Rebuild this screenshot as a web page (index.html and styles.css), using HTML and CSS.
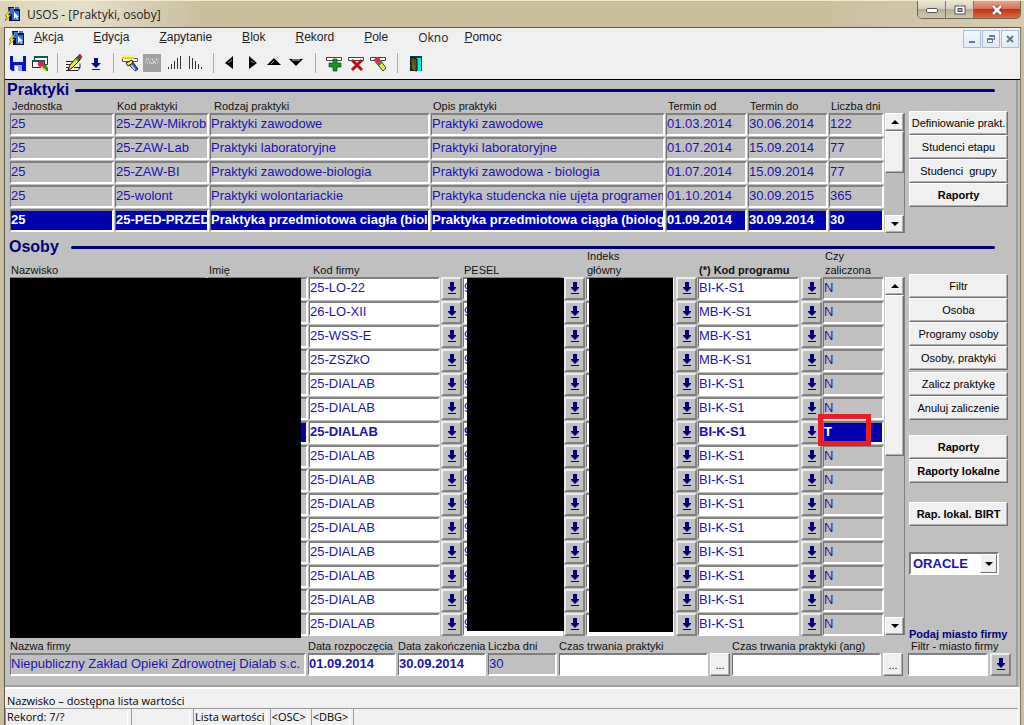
FILE: index.html
```html
<!DOCTYPE html>
<html lang="pl">
<head>
<meta charset="utf-8">
<title>USOS - [Praktyki, osoby]</title>
<link rel="stylesheet" href="styles.css">
</head>
<body>
<svg class="sprite" aria-hidden="true">
  <symbol id="app" viewBox="0 0 16 16">
    <path d="M3 1h6v2h6v12H4V8z" fill="#06104e"/>
    <path d="M5 2h4v3H5zM10 1h4v2h-4z" fill="#3678d8"/>
    <path d="M4 5h3v3H4zM7 5h7v9H7z" fill="#2e6de0"/>
    <path d="M9 6v7l2-2 1 3 1-1-1-2h2z" fill="#fff"/>
    <path d="M4 5 0 10h2l-2 5 6-6H3l3-4z" fill="#ffea20" stroke="#4a4200" stroke-width=".5"/>
  </symbol>
  <symbol id="lov" viewBox="0 0 10 13">
    <path d="M3 0h4v5h2v1L5 10 1 6V5h2zM1 11h8v1H1z" fill="#00007b"/>
  </symbol>
  <symbol id="up" viewBox="0 0 8 4"><path d="M0 4 4 0l4 4z" fill="#000"/></symbol>
  <symbol id="down" viewBox="0 0 8 4"><path d="M0 0h8L4 4z" fill="#000"/></symbol>
</svg>
<div class="window">
  <header class="titlebar">
    <svg class="app-icon"><use href="#app"/></svg>
    <h1 class="title">USOS - [Praktyki, osoby]</h1>
    <div class="win-controls">
      <button class="win-btn" aria-label="Minimalizuj"><svg width="14" height="8"><rect x="1.500" y="2.500" width="11" height="4" rx="1" fill="#fff" stroke="#555"/></svg></button>
      <button class="win-btn" aria-label="Maksymalizuj"><svg width="12" height="10"><rect x="1" y="1" width="10" height="8" fill="#fff" stroke="#555"/><rect x="4" y="3.500" width="4" height="3" fill="#aaa" stroke="#555"/></svg></button>
      <button class="win-btn win-close" aria-label="Zamknij"><svg width="12" height="10"><path d="m2 1 8 8m0-8L2 9" stroke="#5b3430" stroke-width="4"/><path d="m2 1 8 8m0-8L2 9" stroke="#fff" stroke-width="2.500"/></svg></button>
    </div>
  </header>
  <div class="frame">
    <nav class="menubar">
      <svg class="app-icon"><use href="#app"/></svg>
      <div class="menus">
        <a href="#"><u>A</u>kcja</a>
        <a href="#"><u>E</u>dycja</a>
        <a href="#"><u>Z</u>apytanie</a>
        <a href="#"><u>B</u>lok</a>
        <a href="#"><u>R</u>ekord</a>
        <a href="#"><u>P</u>ole</a>
        <a href="#" class="menu-system">Okno</a>
        <a href="#"><u>P</u>omoc</a>
      </div>
      <div class="mdi-controls">
        <button aria-label="Minimalizuj okno"><svg width="10" height="10"><path d="M2 7h6v2H2z" fill="#64778f"/></svg></button>
        <button aria-label="Przywróć okno"><svg width="10" height="10" fill="none" stroke="#64778f"><path d="M3.500 3V1.500h5v4H7M3 2.500h6M1.500 4.500h5v4h-5zM1 5.500h6"/></svg></button>
        <button aria-label="Zamknij okno"><svg width="10" height="10"><path d="m2 2 6 6m0-6L2 8" stroke="#64778f" stroke-width="2"/></svg></button>
      </div>
    </nav>
    <div class="toolbar" role="toolbar">
      <button aria-label="Zapisz"><svg viewBox="0 0 18 18"><path d="M1 2h16v15H3l-2-2z" fill="#0a10c4"/><path d="M4 2h10v6H4z" fill="#e8ecff"/><path d="M5 11h8v6H5z" fill="#9aa4e0"/><path d="M6 12h3v5H6z" fill="#fff"/></svg></button>
      <button aria-label="Drukuj"><svg viewBox="0 0 18 18"><path d="M3.500 2.500h13v8h-13z" fill="#fff" stroke="#123c3c"/><path d="M3 2h14v2H3z" fill="#155"/><path d="M1.500 6.500h12v7h-12z" fill="#fff" stroke="#222"/><path d="M1 6h13v2H1z" fill="#155"/><circle cx="10" cy="10" r="3" fill="#e0184c"/><path d="m11 13 3-3 3 4v3h-2z" fill="#2c8a20"/><path d="m10 13 5 4" stroke="#f2e21a" stroke-width="2"/></svg></button>
      <span class="sep"></span>
      <button aria-label="Edytuj"><svg viewBox="0 0 18 18"><path d="M1 7.500h9M1 10.500h4M1 13.500h3M9 13.500h6v-4M1 16.500h12l2-3" fill="none" stroke="#222"/><path d="m3 16 2-5 7-8 3 3-8 8z" fill="#f4e030" stroke="#222"/><path d="m12 3 3 3 2-3-2-3z" fill="#d21838" stroke="#222" stroke-width=".5"/><path d="m11 4 3 3" stroke="#14a040" stroke-width="2"/></svg></button>
      <button aria-label="Lista wartości"><svg viewBox="0 0 18 18"><path d="M7 4h4v5h3l-5 5-5-5h3zM5 15h8v1H5z" fill="#00108b"/></svg></button>
      <span class="sep"></span>
      <button aria-label="Wprowadź zapytanie"><svg viewBox="0 0 18 18"><path d="M0 1h12v7H0z" fill="#fff36a"/><path d="M1.500 4.500h15v3h-15z" fill="#fff" stroke="#555"/><path d="M1 4h12" stroke="#e8d300" stroke-width="2"/><path d="m6 9 5-2 6 8-3 2z" fill="#3862b8" stroke="#222"/><path d="m5 9 6-3 1 3-5 3z" fill="#f2ee60" stroke="#222"/><path d="m10 11 4 5" stroke="#a9d0ff" stroke-width="2"/></svg></button>
      <button aria-label="Wykonaj zapytanie" disabled><svg viewBox="0 0 18 18"><path d="M0 0h18v18H0z" fill="#a0a0a0"/><path d="M3 5h12v4H3z" fill="none" stroke="#ddd" stroke-dasharray="1 1"/><path d="m4 5 5 5 5-5M9 6l4 4" stroke="#e8e8e8" stroke-dasharray="2 1" fill="none"/></svg></button>
      <button aria-label="Sortuj rosnąco"><svg viewBox="0 0 18 18"><path d="M3.500 13v2M6.500 10v5M9.500 7v8M12.500 4v11M15.500 2v13" stroke="#333"/></svg></button>
      <button aria-label="Sortuj malejąco"><svg viewBox="0 0 18 18"><path d="M2.500 2v13M5.500 4v11M8.500 7v8M11.500 10v5M14.500 13v2" stroke="#333"/></svg></button>
      <span class="sep"></span>
      <button aria-label="Poprzedni blok"><svg viewBox="0 0 18 18"><path d="M12 2v13L4 9z"/><path d="m11 6-4 3" stroke="#999"/></svg></button>
      <button aria-label="Następny blok"><svg viewBox="0 0 18 18"><path d="M6 2v13l8-6z"/><path d="m8 7 3 2" stroke="#999"/></svg></button>
      <button aria-label="Poprzedni rekord"><svg viewBox="0 0 18 18"><path d="M2 11h14L9 4z"/><path d="M6 10l3-3" stroke="#aaa"/></svg></button>
      <button aria-label="Następny rekord"><svg viewBox="0 0 18 18"><path d="M2 5h14l-7 7z"/><path d="M5 6h8" stroke="#ddd"/></svg></button>
      <span class="sep sep-wide"></span>
      <button aria-label="Wstaw rekord"><svg viewBox="0 0 18 18"><path d="M1.500 3.500h15v3h-15z" fill="#fff" stroke="#444"/><path d="M8 5h4v4h4v4h-4v4H8v-4H4V9h4z" fill="#15902b" stroke="#0a4c16" stroke-width=".7"/></svg></button>
      <button aria-label="Usuń rekord"><svg viewBox="0 0 18 18"><path d="M1.500 3.500h15v3h-15z" fill="#fff" stroke="#444"/><path d="m5 6 10 10m0-10L5 16" stroke="#b5101c" stroke-width="3"/></svg></button>
      <button aria-label="Wyczyść rekord"><svg viewBox="0 0 18 18"><path d="M1.500 3.500h15v3h-15z" fill="#fff" stroke="#444"/><path d="m5 6 4-3 8 11-3 3z" fill="#f2e832" stroke="#444"/><path d="m5 6 4-3 3 4-4 3z" fill="#e02858"/><path d="m8 10 4-3 1 2-3 3z" fill="#209040"/></svg></button>
      <span class="sep sep-wide"></span>
      <button aria-label="Wyjście"><svg viewBox="0 0 18 18"><path d="M3 2h12v15H3z" fill="#083c3c"/><path d="M9 4h5v13H9z" fill="#10e6ee"/><path d="m4 3 6 2v12l-6-1z" fill="#574d18" stroke="#111"/><path d="m5 7 3 7m-3-3 3 6" stroke="#9b8e3a" stroke-dasharray="1 1"/></svg></button>
    </div>

    <main class="canvas">
      <section class="block">
        <h2 class="block-title">Praktyki</h2>
        <div class="block-body">
          <table class="grid" id="praktyki">
            <colgroup><col class="w105"><col class="w95"><col class="w221"><col><col class="w82"><col class="w81"><col class="w56"></colgroup>
            <thead><tr><th>Jednostka</th><th>Kod praktyki</th><th class="indent">Rodzaj praktyki</th><th>Opis praktyki</th><th>Termin od</th><th>Termin do</th><th>Liczba dni</th></tr></thead>
            <tbody></tbody>
          </table>
          <div class="scroll">
            <button aria-label="W górę"><svg><use href="#up"/></svg></button>
            <div class="thumb thumb-short"></div>
            <button class="scroll-end" aria-label="W dół"><svg><use href="#down"/></svg></button>
          </div>
          <div class="side">
            <button class="btn">Definiowanie prakt.</button>
            <button class="btn">Studenci etapu</button>
            <button class="btn">Studenci&nbsp; grupy</button>
            <button class="btn strong">Raporty</button>
          </div>
        </div>
      </section>

      <section class="block block-people">
        <h2 class="block-title">Osoby</h2>
        <div class="block-body">
          <table class="grid" id="osoby">
            <colgroup><col><col class="w101"><col class="w132"><col class="w22"><col class="w101"><col class="w22"><col class="w90"><col class="w22"><col class="w103"><col class="w22"><col class="w62"></colgroup>
            <thead><tr><th class="flush">Nazwisko</th><th class="flush">Imię</th><th class="indent" colspan="2">Kod firmy</th><th class="flush" colspan="2">PESEL</th><th class="flush" colspan="2">Indeks<br>główny</th><th class="flush strong" colspan="2">(*) Kod programu</th><th>Czy<br>zaliczona</th></tr></thead>
            <tbody></tbody>
          </table>
          <div class="scroll">
            <button aria-label="W górę"><svg><use href="#up"/></svg></button>
            <div class="thumb thumb-long"></div>
            <button class="scroll-end" aria-label="W dół"><svg><use href="#down"/></svg></button>
          </div>
          <div class="side">
            <div class="group"><button class="btn">Filtr</button><button class="btn">Osoba</button><button class="btn">Programy osoby</button><button class="btn">Osoby, praktyki</button></div>
            <div class="group"><button class="btn">Zalicz praktykę</button><button class="btn">Anuluj zaliczenie</button></div>
            <div class="group reports"><button class="btn strong">Raporty</button><button class="btn strong">Raporty lokalne</button></div>
            <div class="group birt"><button class="btn strong">Rap. lokal. BIRT</button></div>
            <div class="combo">
              <select aria-label="Typ raportu"><option>ORACLE</option></select>
              <span class="combo-arrow"><svg><use href="#down"/></svg></span>
            </div>
            <p class="hint">Podaj miasto firmy</p>
          </div>
        </div>
      </section>

      <div class="details">
        <label class="d-name">Nazwa firmy<input class="field gray" value="Niepubliczny Zakład Opieki Zdrowotnej Dialab s.c. I"></label>
        <label class="d-date">Data rozpoczęcia<input class="field strong" value="01.09.2014"></label>
        <label class="d-date">Data zakończenia<input class="field strong" value="30.09.2014"></label>
        <label class="d-days">Liczba dni<input class="field gray" value="30"></label>
        <label class="d-time">Czas trwania praktyki<input class="field"></label>
        <button class="btn more" aria-label="Edytuj czas trwania">...</button>
        <label class="d-time">Czas trwania praktyki (ang)<input class="field"></label>
        <button class="btn more" aria-label="Edytuj czas trwania (ang)">...</button>
        <label class="d-city"><span>Filtr - miasto firmy</span><input class="field"></label>
        <button class="lov" aria-label="Lista miast"><svg><use href="#lov"/></svg></button>
      </div>
    </main>

    <footer class="status">
      <p class="message">Nazwisko – dostępna lista wartości</p>
      <div class="cells"><span class="s-record">Rekord: 7/?</span><span class="s-empty"></span><span class="s-list">Lista wartości</span><span>&lt;OSC&gt;</span><span>&lt;DBG&gt;</span><span class="s-rest"></span></div>
    </footer>
  </div>
</div>
<script src="app.js"></script>
</body>
</html>
```
FILE: styles.css
```css
* { box-sizing: border-box; }
body, h1, h2, p { margin: 0; }
body {
  font-family: "Liberation Sans", Arial, sans-serif;
  font-size: 11px;
  color: #111;
  background: #c9bf9f;
}
button, input, select { font: inherit; color: inherit; border-radius: 0; margin: 0; }
button { padding: 0; display: flex; align-items: center; justify-content: center; }
svg { display: block; flex: none; }
.sprite { position: absolute; width: 0; height: 0; }
.strong { font-weight: bold; }

.window { min-height: 100vh; display: flex; flex-direction: column; overflow: hidden; border-top: 1px solid #f3ead0; }
.titlebar {
  display: flex;
  align-items: center;
  height: 26px;
  padding: 0 3px 0 5px;
  gap: 6px;
  background: linear-gradient(90deg, #ddd4b6, #e6dfca 80px, #c9bf9f 200px, #c9bf9f 80%, #d6cdb2);
}
.title { font: 12px "Open Sans", "Noto Sans", sans-serif; color: #222; flex: 1; white-space: nowrap; }
.app-icon { width: 16px; height: 16px; }
.win-controls { display: flex; align-self: flex-start; border: 1px solid #6f6857; border-top: 0; border-radius: 0 0 5px 5px; overflow: hidden; }
.win-btn { width: 28px; height: 17px; border: 0; border-right: 1px solid #7d7665; background: linear-gradient(#ece6d5, #d3cbb5 50%, #b7ae94 50%, #cfc6ac); }
.win-close { width: 46px; border-right: 0; background: linear-gradient(#e9a493, #d66950 50%, #bf3518 50%, #dc6a42); }

.frame { flex: 1; display: flex; flex-direction: column; margin: 0 3px 0 4px; border: 1px solid #5d5645; border-bottom: 0; border-right-color: #7f7764; background: #f0f0f0; }
.menubar { display: flex; height: 22px; padding: 2px 1px 0 4px; }
.menus { flex: 1; display: flex; gap: 30px; margin-left: 9px; font-size: 12px; line-height: 14px; }
.menus a { color: #222; text-decoration: none; }
.menu-system { font-family: "Open Sans", "Noto Sans", sans-serif; line-height: 16px; margin-right: -14px; }
.mdi-controls { display: flex; gap: 1px; }
.mdi-controls button { width: 18px; height: 18px; border: 1px solid #a9bdd6; background: linear-gradient(#f2f7fd, #dfeaf7); }
.toolbar { display: flex; align-items: center; height: 30px; padding: 0 2px 3px; border-bottom: 1px solid #000; }
.toolbar button { width: 22px; height: 22px; border: 0; background: none; }
.toolbar svg { width: 18px; height: 18px; }
.sep { width: 12px; height: 20px; background: linear-gradient(#aaa, #aaa) center / 1px 100% no-repeat; }
.sep-wide { width: 16px; }

.canvas { background: #c0c0c0; margin-right: 2px; padding: 1px 8px 9px 5px; border-right: 2px solid #9d9d9d; border-bottom: 2px solid #9d9d9d; box-shadow: 2px 0 #c0c0c0; }
.block-title {
  display: flex;
  align-items: center;
  gap: 6px;
  height: 18px;
  margin: 0 13px 0 -3px;
  font-size: 16px;
  line-height: 18px;
  color: #00007b;
}
.block-title::after { content: ""; flex: 1; height: 3px; border-radius: 2px; background: #00007b; }
.block-people { margin-top: 5px; }
.block-people .block-title { margin-left: -1px; gap: 12px; }
.block-people .block-body { margin-top: -7px; }
.block-body { display: flex; align-items: stretch; }
.grid { flex: 1; min-width: 0; table-layout: fixed; border-collapse: collapse; align-self: flex-start; }
.grid th { height: 14px; padding: 0 0 0 2px; font-weight: normal; text-align: left; vertical-align: bottom; line-height: 14px; white-space: nowrap; }
.grid th.strong { font-weight: bold; }
.grid th.flush { padding-left: 1px; }
.grid th.indent { padding-left: 4px; }
.grid td { position: relative; height: 24px; padding: 0 2px 0 0; vertical-align: top; }
.grid td.tight { padding-right: 1px; }
.w22 { width: 22px; } .w56 { width: 56px; } .w62 { width: 62px; } .w81 { width: 81px; } .w82 { width: 82px; }
.w90 { width: 90px; } .w95 { width: 95px; } .w101 { width: 101px; } .w103 { width: 103px; } .w105 { width: 105px; }
.w132 { width: 132px; } .w221 { width: 221px; }
#praktyki td { padding-right: 1px; }

.field {
  display: block;
  width: 100%;
  height: 23px;
  padding: 0 0 2px;
  border: 2px solid;
  border-color: #808080 #fff #fff #707070;
  border-left-width: 1px;
  background: #fff;
  font-size: 13px;
  color: #1c12b4;
}
.field.gray { background: #c0c0c0; }
.field.selected { background: #0000b0; color: #fff; }
.lov { width: 21px; height: 23px; border: 2px solid; border-color: #ececec #808080 #808080 #ececec; background: #c0c0c0; }
.lov svg { width: 10px; height: 13px; }
.redacted { position: absolute; z-index: 1; top: 1px; left: 0; right: 0; height: 360px; background: #000; }
.redacted.name-end { right: 8px; }
.redacted.pesel { left: 4px; height: 353px; }
.redacted.index { left: 3px; right: 3px; height: 354px; }
.mark { position: absolute; z-index: 2; top: -7px; left: -5px; width: 53px; height: 32px; border: 5px solid #ed1c24; pointer-events: none; }

.scroll { width: 20px; margin-top: 14px; display: flex; flex-direction: column; background: #bdbdbd; border-right: 1px solid #808080; }
.block-people .scroll { margin: 28px 0 2px; }
.scroll button, .thumb, .btn { background: #f0f0f0; border: 1px solid; border-color: #fff #707070 #707070 #fff; box-shadow: inset -1px -1px #b0b0b0; }
.scroll button { height: 18px; flex: none; }
.scroll svg, .combo svg { width: 8px; height: 4px; }
.scroll-end { margin-top: auto; }
.thumb-short { height: 42px; }
.thumb-long { height: 161px; }

.side { width: 103px; padding: 12px 0 0 4px; }
.block-people .side { display: flex; flex-direction: column; padding-top: 25px; }
.btn { width: 100%; height: 24px; color: #000; white-space: nowrap; }
.group + .group { margin-top: 2px; }
.group + .reports { margin-top: 15px; }
.group + .birt { margin-top: 19px; }
.combo { position: relative; width: 90px; margin-top: 26px; }
.combo select { appearance: none; display: block; width: 100%; height: 23px; padding: 0 2px; border: 2px solid; border-color: #7b7b7b #fff #fff #7b7b7b; background: #fff; font-size: 13px; font-weight: bold; color: #1c12b4; }
.combo-arrow { position: absolute; top: 2px; right: 2px; width: 17px; height: 19px; display: flex; align-items: center; justify-content: center; background: #f0f0f0; border: 1px solid; border-color: #fff #707070 #707070 #fff; pointer-events: none; }
.hint { margin: auto 0 -3px; line-height: 12px; font-weight: bold; color: #00007b; white-space: nowrap; }

.details { display: flex; align-items: flex-end; gap: 2px; margin: 2px -3px 0 0; }
.details label { flex: none; line-height: 14px; white-space: nowrap; }
.details label.d-name { flex: 1; min-width: 0; }
.d-date { width: 88px; }
.d-days { width: 69px; }
.d-time { width: 149px; }
.details .more { width: 20px; height: 23px; }
.details .d-city { width: 80px; margin-left: 3px; }
.d-city span { margin-left: 3px; }

.status { flex: 1; display: flex; flex-direction: column; margin-right: 2px; padding-top: 5px; border-top: 2px solid #fff; font-family: "Open Sans", "Noto Sans", sans-serif; font-size: 11px; color: #000; }
.message { height: 14px; padding-left: 2px; line-height: 14px; }
.cells { flex: 1; display: flex; gap: 3px; min-height: 16px; border-top: 1px solid #999; line-height: 16px; white-space: nowrap; }
.cells span { padding: 0 1px; border-left: 1px solid #999; border-right: 1px solid #fff; }
.s-record { width: 123px; }
.s-empty { width: 59px; }
.s-rest { flex: 1; }
```
FILE: app.js
```js
const internships = [
  ["25", "25-ZAW-Mikrob", "Praktyki zawodowe", "Praktyki zawodowe", "01.03.2014", "30.06.2014", "122"],
  ["25", "25-ZAW-Lab", "Praktyki laboratoryjne", "Praktyki laboratoryjne", "01.07.2014", "15.09.2014", "77"],
  ["25", "25-ZAW-BI", "Praktyki zawodowe-biologia", "Praktyki zawodowa - biologia", "01.07.2014", "15.09.2014", "77"],
  ["25", "25-wolont", "Praktyki wolontariackie", "Praktyka studencka nie ujęta programem", "01.10.2014", "30.09.2015", "365"],
  ["25", "25-PED-PRZED", "Praktyka przedmiotowa ciagła (biologia)", "Praktyka przedmiotowa ciągła (biologia)", "01.09.2014", "30.09.2014", "30"]
];
const companies = ["25-LO-22", "26-LO-XII", "25-WSS-E", "25-ZSZkO"];
const ROWS = 15;
const CURRENT = 6;

const field = (label, value, cls) =>
  `<input class="field ${cls}" aria-label="${label}" value="${value}">`;
const lov = label =>
  `<td class="tight"><button class="lov" aria-label="${label}"><svg><use href="#lov"/></svg></button></td>`;

const names = ["Jednostka", "Kod praktyki", "Rodzaj praktyki", "Opis praktyki", "Termin od", "Termin do", "Liczba dni"];
document.querySelector("#praktyki tbody").innerHTML = internships.map((row, r) =>
  "<tr>" + row.map((v, c) => `<td>${field(names[c], v, r === 4 ? "selected strong" : "gray")}</td>`).join("") + "</tr>"
).join("");

let html = "";
for (let i = 0; i < ROWS; i++) {
  const current = i === CURRENT;
  const cover = cls => i === 0 ? `<div class="redacted ${cls}"></div>` : "";
  const fill = current ? "selected strong" : "gray";
  const weight = current ? "strong" : "";
  const program = i > 0 && i < 4 ? "MB-K-S1" : "BI-K-S1";
  html += `<tr>
    <td>${field("Nazwisko", "", fill)}${cover("")}</td>
    <td class="tight">${field("Imię", "", fill)}${cover("name-end")}</td>
    <td class="tight">${field("Kod firmy", companies[i] || "25-DIALAB", weight)}</td>${lov("Lista firm")}
    <td class="tight">${field("PESEL", "9", weight)}${cover("pesel")}</td>${lov("Lista osób")}
    <td>${field("Indeks główny", "", "")}${cover("index")}</td>${lov("Lista indeksów")}
    <td>${field("Kod programu", program, weight)}</td>${lov("Lista programów")}
    <td class="tight">${field("Czy zaliczona", current ? "T" : "N", fill)}${current ? '<div class="mark"></div>' : ""}</td>
  </tr>`;
}
document.querySelector("#osoby tbody").innerHTML = html;
```
